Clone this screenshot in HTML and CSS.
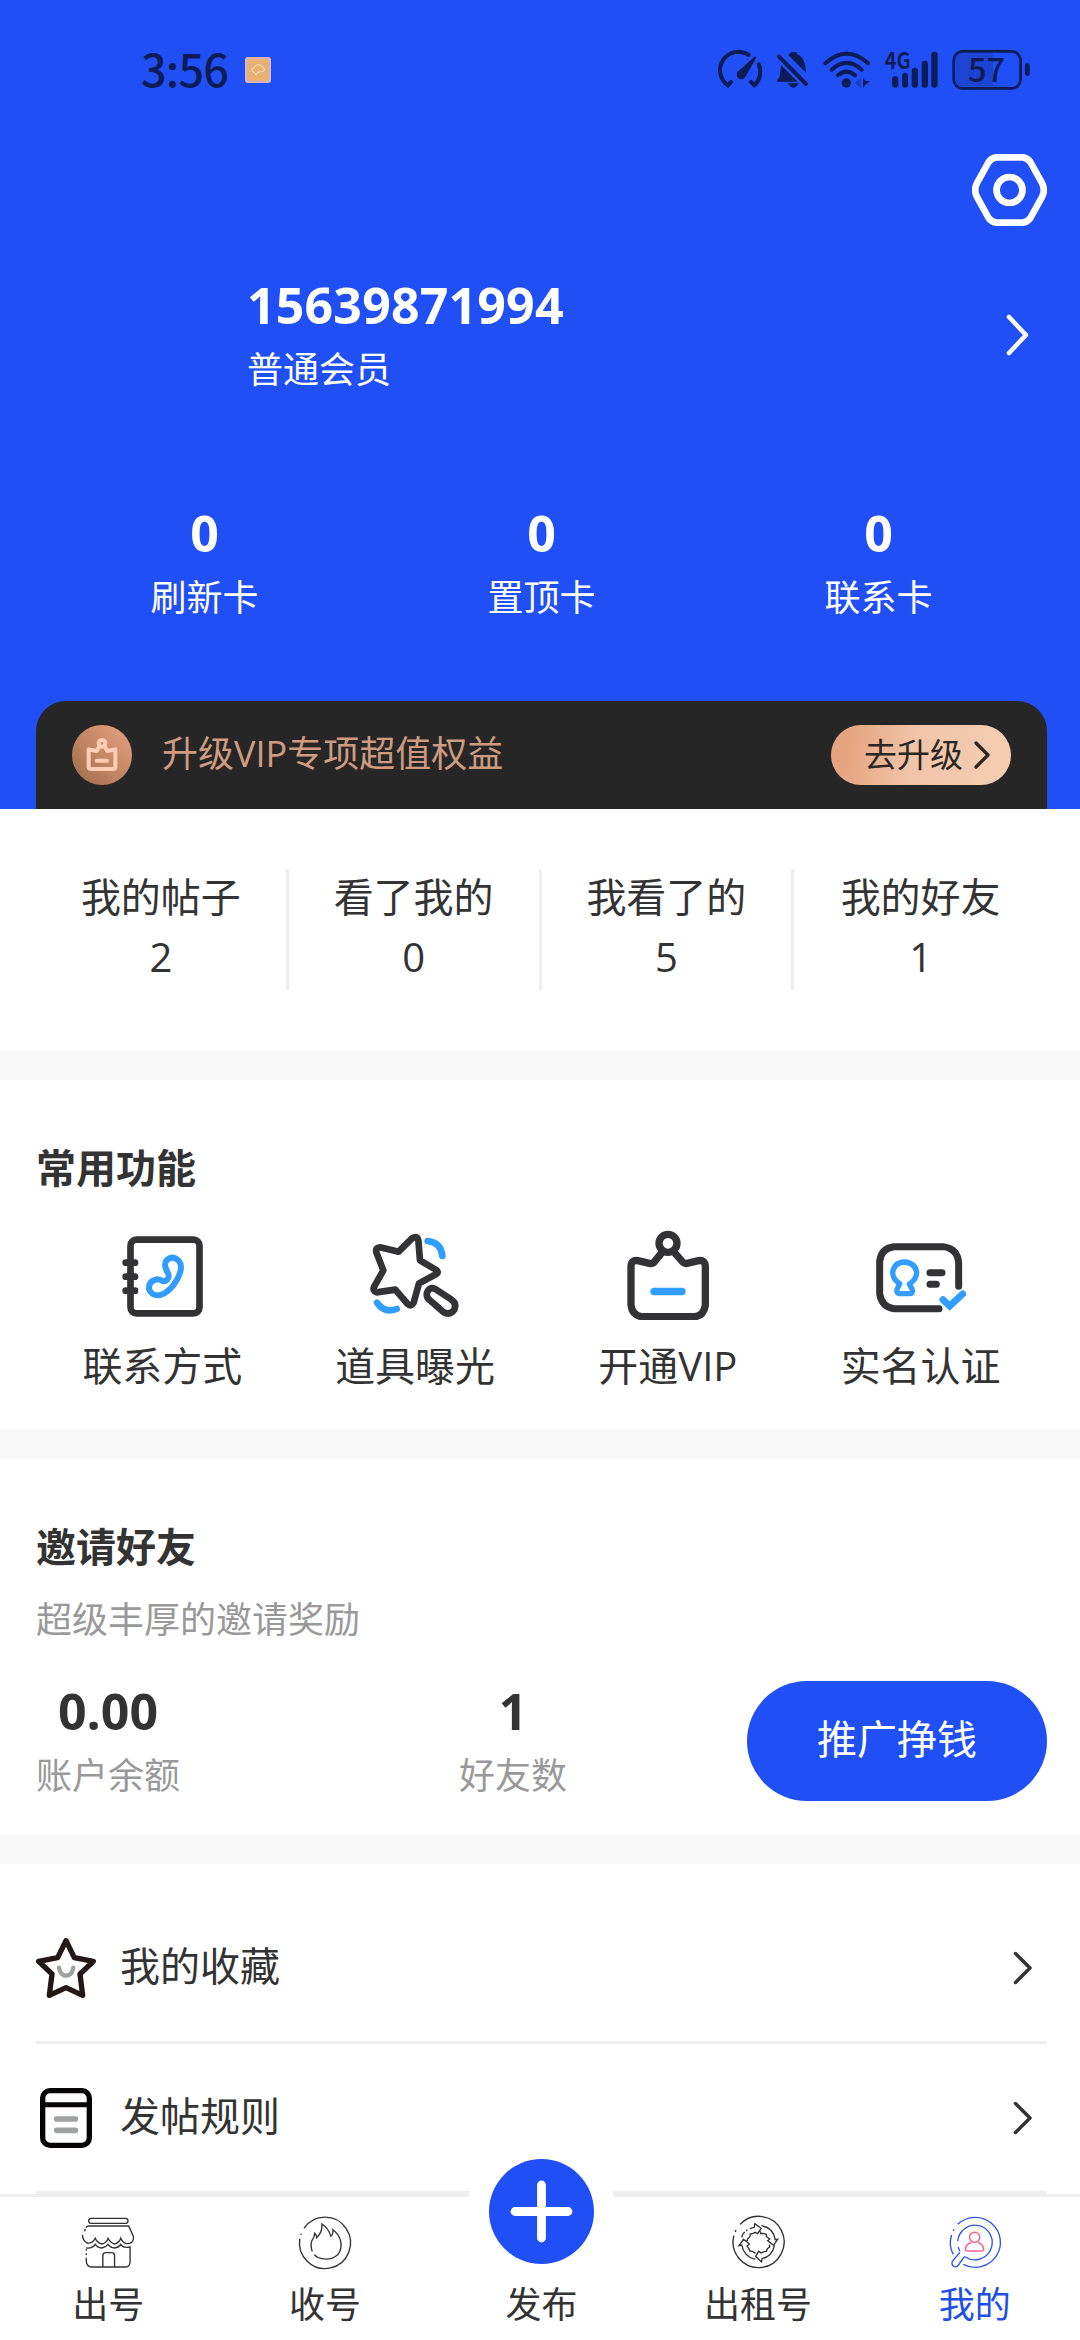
FILE: index.html
```html
<!DOCTYPE html>
<html lang="zh-CN">
<head>
<meta charset="utf-8">
<title>我的</title>
<link rel="stylesheet" href="styles.css">
</head>
<body>
<div class="page">
  <header class="hero">
    <div class="statusbar">
      <span class="clock">3:56</span>
      <svg class="weather" viewBox="375 81 78 78"><rect x="375" y="81" width="78" height="78" rx="9" fill="#d9b4c4"/><rect x="381" y="87" width="66" height="66" rx="7" fill="#e8b173"/><path d="M402 127q-8-2-6-9 6-1 8-9 8-8 18-3 3 5 8 6 5 3 3 10-8 5-18 4l-7 9-4-7z" fill="none" stroke="#fbe9cd" stroke-width="3"/></svg>
      <svg class="indicators" viewBox="60 55 930 125" fill="#0b1c56">
        <g fill="none" stroke="#0b1c56" stroke-width="12" stroke-linecap="round">
          <path d="M146 73A55 55 0 0 0 84 164L93 154M176 101A55 55 0 0 1 163 164L153 154"/>
          <path d="M376 98Q440 40 504 98M395 117Q440 76 485 117M414 134Q440 112 465 134"/>
          <path d="M237 78L318 160"/>
        </g>
        <path d="M163 78Q168 75 168 83L137 137A14 14 0 1 1 113 123Z"/><circle cx="123" cy="132" r="12"/>
        <path d="M243 103L293 153H233Q228 146 238 142ZM264 73Q270 70 273 65Q280 61 289 65L292 71Q316 80 318 126ZM264 158H296Q290 171 280 171Q270 171 264 158Z"/>
        <circle cx="439" cy="157" r="14"/>
        <path d="M482 143V171L464 157Z" fill="#173cb8"/><path d="M489 142V172L496 162L510 152L496 150Z"/>
        <rect x="576" y="137" width="19" height="34" rx="9"/><rect x="606" y="126" width="18" height="45" rx="9"/><rect x="635" y="111" width="19" height="60" rx="9"/><rect x="665" y="90" width="19" height="81" rx="9"/><rect x="694" y="63" width="19" height="108" rx="9"/>
        <text class="net" x="554" y="115" textLength="78" lengthAdjust="spacingAndGlyphs">4G</text>
        <path d="M766 88Q766 68 788 68H879V167H788Q766 167 766 146Z" fill="#1c43d2"/>
        <rect x="761" y="62" width="201" height="111" rx="27" fill="none" stroke="#0b1c56" stroke-width="8"/>
        <rect x="975" y="98" width="14" height="38" rx="7"/>
        <text class="charge" x="804" y="153" textLength="112" lengthAdjust="spacingAndGlyphs">57</text>
      </svg>
    </div>
    <div class="settings">
      <svg class="gear" viewBox="816 372 225 216" fill="none" stroke="#fff" stroke-width="20"><path d="M889 382H968Q982 383 991 396L1025 457Q1038 480 1025 503L991 564Q982 577 968 578H889Q875 577 866 564L832 503Q819 480 832 457L866 396Q875 383 889 382Z"/><circle cx="928.500" cy="480" r="39"/></svg>
    </div>
    <div class="profile">
      <div>
        <div class="phone">15639871994</div>
        <div class="level">普通会员</div>
      </div>
      <svg class="profile-arrow" viewBox="0 0 26 44"><path d="M4 4L21 22L4 40" fill="none" stroke="#fff" stroke-width="4.500" stroke-linecap="round" stroke-linejoin="round"/></svg>
    </div>
    <div class="cards">
      <div><div class="big">0</div><div class="level">刷新卡</div></div>
      <div><div class="big">0</div><div class="level">置顶卡</div></div>
      <div><div class="big">0</div><div class="level">联系卡</div></div>
    </div>
    <div class="banner">
      <svg class="medal" viewBox="126 105 180 180">
        <defs><linearGradient id="copper" x1="1" y1="0" x2="0" y2="1"><stop offset=".2" stop-color="#d99876"/><stop offset=".9" stop-color="#a67151"/></linearGradient></defs>
        <circle cx="216" cy="195" r="90" fill="url(#copper)"/>
        <g fill="none" stroke="#ffceb4" stroke-width="12" stroke-linecap="round" stroke-linejoin="round"><circle cx="216" cy="160" r="10"/><path d="M208 170L200 183L176 178V231Q176 237 184 237H248Q256 237 256 231V178L232 183L224 170M200 212H231"/></g>
      </svg>
      <span class="banner-text">升级VIP专项超值权益</span>
      <span class="upgrade">去升级<svg viewBox="0 0 18 30"><path d="M3 3L15 15L3 27" fill="none" stroke="#2a2725" stroke-width="3.300" stroke-linecap="round" stroke-linejoin="round"/></svg></span>
    </div>
  </header>

  <section class="counters">
    <div><span>我的帖子</span><span>2</span></div>
    <div><span>看了我的</span><span>0</span></div>
    <div><span>我看了的</span><span>5</span></div>
    <div><span>我的好友</span><span>1</span></div>
  </section>

  <section class="tools">
    <h2>常用功能</h2>
    <div class="tool-grid">
      <div>
        <svg viewBox="171 60 270 270" fill="none" stroke-width="20" stroke-linecap="round" stroke-linejoin="round"><rect x="211.500" y="89" width="207" height="221" rx="18" stroke="#333335"/><path d="M197 158H225M197 200H225M197 242H225" stroke="#333335"/><path d="M322 186Q310 164 319 152Q337 134 356 152Q371 170 353 205Q330 248 298 256Q273 257 267 237Q266 212 291 208Q302 208 307 213Q319 216 325 203Q328 194 322 186Z" stroke="#309dff" stroke-width="18"/></svg>
        <span>联系方式</span>
      </div>
      <div>
        <svg viewBox="930 60 270 270" fill="none" stroke="#333335" stroke-width="20" stroke-linecap="round" stroke-linejoin="round"><path d="M1056 85Q1072 75 1075 91L1080 151L1129 180Q1138 186 1129 192L1077 220L1061 278Q1053 292 1043 282L1006 239L950 247Q936 243 943 229L970 181L949 127Q946 112 960 112L1016 125Z"/><path d="M1101 248Q1108 229 1126 237L1173 268Q1191 279 1183 299Q1171 317 1151 307L1108 269Q1098 261 1101 248Z"/><path d="M1103 93Q1143 97 1147 138M951 278Q973 311 1010 297" stroke="#309dff"/></svg>
        <span>道具曝光</span>
      </div>
      <div>
        <svg viewBox="189 60 270 270" fill="none" stroke="#333335" stroke-width="22" stroke-linecap="round" stroke-linejoin="round"><circle cx="324" cy="100" r="27"/><path d="M308 125L281 158Q276 162 268 160L233 152Q213 149 213 170V285Q216 315 244 320H405Q431 317 436 286V170Q436 149 416 152L381 160Q373 162 368 156L341 125"/><path d="M282 244.500H366" stroke="#309dff"/></svg>
        <span>开通VIP</span>
      </div>
      <div>
        <svg viewBox="948 60 270 270" fill="none" stroke="#333335" stroke-width="21" stroke-linecap="round" stroke-linejoin="round"><path d="M1196 229V160Q1194 117 1150 110H1002Q963 115 959 154V252Q965 291 1003 296H1137M1110 188H1146M1110 223H1129"/><path d="M1019 221Q998 209 998 187Q1003 157 1033 156Q1065 158 1070 187Q1070 209 1048 222L1057 239Q1058 250 1051 251H1018Q1009 250 1011 239Z" stroke="#309dff" stroke-width="16"/><path d="M1149 269L1169 288L1208 252" stroke="#309dff" stroke-linejoin="miter"/></svg>
        <span>实名认证</span>
      </div>
    </div>
  </section>

  <section class="invite">
    <h2>邀请好友</h2>
    <p>超级丰厚的邀请奖励</p>
    <div class="invite-row">
      <div><div class="big">0.00</div><div class="caption">账户余额</div></div>
      <div class="friends"><div class="big">1</div><div class="caption">好友数</div></div>
      <span class="promote">推广挣钱</span>
    </div>
  </section>

  <section class="menu">
    <div class="menu-item">
      <svg class="menu-icon" viewBox="48 54 180 180" fill="none" stroke-linecap="round" stroke-linejoin="round"><path d="M138 62L163 113L220 124L180 162L188 226L138 203L88 226L96 162L56 124L113 113Z" stroke="#231815" stroke-width="16"/><path d="M117 143Q121 167 138 167Q156 167 160 143" stroke="#9fa0a0" stroke-width="13"/></svg>
      <span>我的收藏</span>
      <svg class="go" viewBox="0 0 20 34"><path d="M2.500 2.500L17 17L2.500 31.500"/></svg>
    </div>
    <div class="menu-item">
      <svg class="menu-icon" viewBox="48 504 180 180" fill="none" stroke-linecap="round"><rect x="68" y="512" width="140" height="164" rx="22" stroke="#050303" stroke-width="16"/><path d="M68 554H208" stroke="#050303" stroke-width="15"/><path d="M110 597H166M110 631H166" stroke="#9fa0a0" stroke-width="17"/></svg>
      <span>发帖规则</span>
      <svg class="go" viewBox="0 0 20 34"><path d="M2.500 2.500L17 17L2.500 31.500"/></svg>
    </div>
  </section>

  <nav class="tabbar">
    <div class="tab">
      <svg class="tab-icon" viewBox="226 215 174 180" preserveAspectRatio="none"><rect x="257" y="234" width="114" height="15" rx="7"/><path d="M258 257H373L387 289Q388 310 367 310Q355 307 350 294Q345 309 331 311Q319 307 313 294Q309 308 295 311Q281 307 276 294Q268 311 252 308Q239 299 239 284M245 273L247 266M249 262Q252 257 258 257M250 323Q268 325 276 312Q282 322 295 323Q307 321 313 312Q319 322 332 323Q345 321 350 312Q357 324 377 320V364Q377 380 362 380H266Q252 380 250 364V352M250 339V344M250 326V331M298 380V346Q298 337 307 337H324Q332 337 332 346V380"/></svg>
      <span>出号</span>
    </div>
    <div class="tab">
      <svg class="tab-icon" viewBox="857 215 174 180" preserveAspectRatio="none"><path d="M883 264A74 77 0 1 1 871 295M874 284L875 280M907 334Q900 311 907 299Q914 290 914 279Q920 284 920 292Q937 276 935 251Q955 265 961 288Q968 282 967 268Q983 280 989 300Q995 326 980 344Q962 360 935 355Q920 352 913 343"/></svg>
      <span>收号</span>
    </div>
    <div class="tab publish">
      <div class="publish-ring"><svg viewBox="0 0 105 105"><circle cx="52.500" cy="52.500" r="52.500" fill="#204ff5"/><path d="M26 52.500H79M52.500 26V79" stroke="#fff" stroke-width="8.800" stroke-linecap="round"/></svg></div>
      <span>发布</span>
    </div>
    <div class="tab">
      <svg class="tab-icon" viewBox="546 215 174 180" preserveAspectRatio="none"><path d="M581 252A74 77 0 1 1 563 286M567 275L569 269"/><path d="M609 265L622 261L624 250L642 264L632 280L625 276Q616 281 611 281L609 290Q602 294 601 302M599 272L602 268M643 256Q678 263 683 298L690 297L678 315L661 301L667 296L658 289L657 282L648 279L641 280L640 273M681 315Q674 348 645 355L643 365L626 348L635 333L642 338L650 334L657 333L660 325L667 320L666 313M625 357Q591 348 586 314L578 316L591 297L608 311L601 317L606 323L609 332L618 334L626 339M586 291Q588 279 595 275"/></svg>
      <span>出租号</span>
    </div>
    <div class="tab active">
      <svg class="tab-icon" viewBox="1176 215 174 180" preserveAspectRatio="none"><path d="M1213 252A73 75 0 1 1 1229 372M1200 342A73 75 0 0 1 1195 284M1200 272L1202 267M1213 303A50 52 0 1 1 1234 349M1214 320L1219 333M1219 336L1197 364Q1194 375 1203 379Q1210 381 1215 374L1233 348"/><path class="person" d="M1262 276A15 15 0 1 1 1262 306A15 15 0 1 1 1262 276M1252 307Q1237 310 1235 327Q1235 332 1241 332H1283Q1289 332 1288 325Q1285 310 1272 307"/></svg>
      <span>我的</span>
    </div>
  </nav>
</div>
</body>
</html>
```
FILE: styles.css
```css
* { box-sizing: border-box; }
html, body { margin: 0; padding: 0; }
body {
  width: 1080px;
  height: 2340px;
  overflow: hidden;
  background: #fff;
  color: #333;
  font-family: "Open Sans", "Noto Sans CJK SC", sans-serif;
  font-size: 40px;
  line-height: 56px;
}
svg { display: block; flex: none; }
h2 { margin: 0; font-size: 40px; line-height: 56px; font-weight: 700; }
p { margin: 0; }

.page {
  width: 1080px;
  height: 2340px;
  overflow: hidden;
  display: flex;
  flex-direction: column;
}

/* header */
.hero {
  height: 809px;
  flex: none;
  padding: 0 33px 0 36px;
  background: #204ff5;
  color: #fff;
}
.statusbar {
  height: 140px;
  padding-left: 105px;
  display: flex;
  align-items: center;
}
.clock {
  width: 90px;
  padding-bottom: 4px;
  font-family: "Noto Sans CJK SC", sans-serif;
  font-size: 45px;
  font-weight: 500;
  line-height: 60px;
  letter-spacing: -0.8px;
  color: #0b1c56;
}
.weather { width: 26px; height: 26px; margin-left: 14px; }
.indicators { width: 310px; height: 41.67px; margin-left: auto; margin-right: 17px; overflow: visible; }
.net { font: 700 68px "Noto Sans CJK SC", sans-serif; }
.charge { font: 500 98px "Noto Sans CJK SC", sans-serif; }

.settings { margin-top: 14px; display: flex; justify-content: flex-end; }
.gear { width: 75px; height: 72px; }

.profile {
  margin-top: 48px;
  padding: 0 16px 0 211px;
  height: 121px;
  display: flex;
  align-items: center;
  justify-content: space-between;
}
.profile-arrow { width: 26px; height: 44px; }
.phone, .big { font-size: 50px; line-height: 60px; font-weight: 700; }
.phone { letter-spacing: 0.2px; }
.level, .caption { margin-top: 10px; font-size: 36px; line-height: 50px; }

.cards {
  margin-top: 108px;
  display: grid;
  grid-template-columns: repeat(3, 1fr);
  text-align: center;
}

.banner {
  margin-top: 78px;
  height: 108px;
  padding: 0 36px;
  display: flex;
  align-items: center;
  background: #262626;
  border-radius: 30px 30px 0 0;
}
.medal { width: 60px; height: 60px; }
.banner-text { margin-left: 30px; padding-bottom: 3px; font-size: 36px; color: #cf9b80; }
.upgrade {
  margin-left: auto;
  width: 180px;
  height: 60px;
  padding-left: 33px;
  display: flex;
  align-items: center;
  gap: 10px;
  border-radius: 30px;
  background: linear-gradient(100deg, #e5a47f 10%, #f1c4a8 45%, #f4cdb1 90%);
  color: #2a2725;
  font-size: 33px;
  line-height: 50px;
}
.upgrade svg { width: 18px; height: 30px; }

/* post counters */
.counters {
  height: 241px;
  flex: none;
  padding: 60px 33px 0 36px;
  display: grid;
  grid-template-columns: repeat(4, 1fr);
}
.counters div {
  height: 121px;
  display: flex;
  flex-direction: column;
  gap: 4px;
  text-align: center;
  border-right: 3px solid #eee;
}
.counters div:last-child { border-right: 0; }

/* tools */
.tools, .invite, .menu { flex: none; border-top: 30px solid #f8f8f8; padding: 60px 33px 0 36px; }
.tools { height: 379px; }
.tool-grid {
  margin-top: 34px;
  display: grid;
  grid-template-columns: repeat(4, 1fr);
}
.tool-grid div {
  display: flex;
  flex-direction: column;
  align-items: center;
  gap: 18px;
}
.tool-grid svg { width: 90px; height: 90px; }

/* invite */
.invite { height: 405px; }
.invite p { margin-top: 20px; font-size: 36px; line-height: 50px; color: #999; }
.invite-row {
  margin-top: 36px;
  display: flex;
  text-align: center;
}
.caption { color: #999; }
.friends { margin-left: 279px; }
.promote {
  margin-left: auto;
  width: 300px;
  height: 120px;
  border-radius: 60px;
  background: #204ff5;
  color: #fff;
  line-height: 115px;
}

/* menu list */
.menu { padding-top: 30px; height: 360px; }
.menu-item {
  height: 150px;
  display: flex;
  align-items: center;
  border-bottom: 3px solid #eee;
  padding: 0 14px 0 0;
}
.menu-item span { padding-bottom: 4px; }
.menu-icon { width: 60px; height: 60px; margin-right: 24px; }
.go { width: 20px; height: 34px; margin-left: auto; }
.go path { fill: none; stroke: #333; stroke-width: 3.5; stroke-linecap: round; stroke-linejoin: round; }

/* bottom navigation */
.tabbar {
  width: 1083px;
  height: 146px;
  flex: none;
  border-top: 3px solid #eee;
  display: grid;
  grid-template-columns: repeat(5, 1fr);
}
.tab {
  position: relative;
  padding-top: 15px;
  display: flex;
  flex-direction: column;
  align-items: center;
  font-size: 36px;
  line-height: 50px;
}
.tab span { margin-top: 8px; }
.tab-icon { width: 60px; height: 60px; fill: none; stroke: #333; stroke-width: 4; }
.tab.active { color: #204fe8; }
.tab.active .tab-icon { stroke: #2f57e6; }
.tab-icon .person { stroke: #f0688f; stroke-width: 4.5; }
.publish { padding-top: 75px; }
.publish-ring {
  position: absolute;
  left: 50%;
  top: -60px;
  width: 148px;
  height: 148px;
  margin-left: -74px;
  padding: 21.5px;
  border-radius: 50%;
  background: #fff;
}
.publish-ring svg { width: 105px; height: 105px; }
.publish span { position: relative; }
```
